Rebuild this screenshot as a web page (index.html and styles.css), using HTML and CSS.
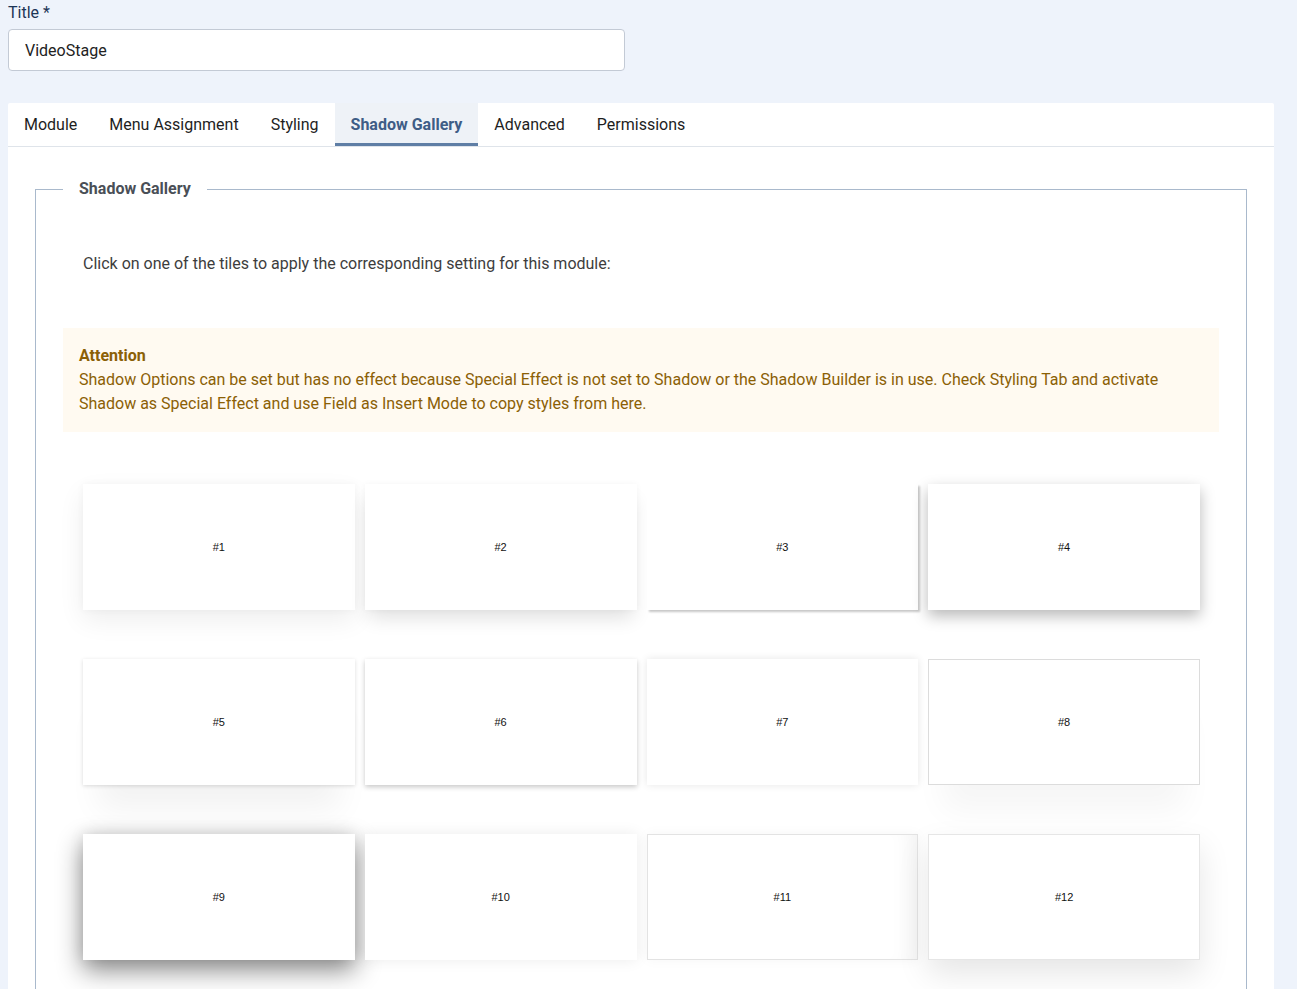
FILE: index.html
```html
<!DOCTYPE html>
<html lang="en">
<head>
<meta charset="utf-8">
<title>VideoStage</title>
<link rel="stylesheet" href="styles.css">
</head>
<body>
<div class="page">
  <label class="title-label" for="title">Title *</label>
  <input class="title-input" id="title" type="text" value="VideoStage">

  <div class="card">
    <div class="tabs">
      <div class="tab">Module</div>
      <div class="tab">Menu Assignment</div>
      <div class="tab">Styling</div>
      <div class="tab active">Shadow Gallery</div>
      <div class="tab">Advanced</div>
      <div class="tab">Permissions</div>
    </div>
    <div class="card-body">
      <fieldset class="gallery">
        <legend>Shadow Gallery</legend>
        <p class="intro">Click on one of the tiles to apply the corresponding setting for this module:</p>
        <div class="alert">
          <strong>Attention</strong><br>
          Shadow Options can be set but has no effect because Special Effect is not set to Shadow or the Shadow Builder is in use. Check Styling Tab and activate Shadow as Special Effect and use Field as Insert Mode to copy styles from here.
        </div>
        <div class="tiles">
          <div class="tile s1">#1</div>
          <div class="tile s2">#2</div>
          <div class="tile s3">#3</div>
          <div class="tile s4">#4</div>
          <div class="tile s5">#5</div>
          <div class="tile s6">#6</div>
          <div class="tile s7">#7</div>
          <div class="tile s8">#8</div>
          <div class="tile s9">#9</div>
          <div class="tile s10">#10</div>
          <div class="tile s11">#11</div>
          <div class="tile s12">#12</div>
        </div>
      </fieldset>
    </div>
  </div>
</div>
</body>
</html>
```
FILE: styles.css
```css
html, body {
  margin: 0;
  padding: 0;
  background: #eef3fb;
  font-family: Roboto, "Liberation Sans", Arial, sans-serif;
  font-size: 16px;
  color: #222;
  overflow: hidden;
}

.page {
  width: 1266px;
  padding: 0 8px;
}

.title-label {
  display: block;
  line-height: 24px;
  color: #1c3556;
  margin-top: 1px;
  margin-bottom: 4px;
}

.title-input {
  display: block;
  box-sizing: border-box;
  width: 617px;
  height: 42px;
  margin: 0;
  padding: 0 16px;
  border: 1px solid #c3cad5;
  border-radius: 4px;
  background: #fff;
  font-family: inherit;
  font-size: 16px;
  color: #222;
}

.card {
  margin-top: 32px;
  background: #fff;
  border-radius: 2px;
  height: 900px;
}

.tabs {
  display: flex;
  border-bottom: 1px solid #dfe4ea;
  height: 43px;
}

.tab {
  padding: 0 16px;
  line-height: 43px;
  color: #1e1e1e;
}

.tab.active {
  background: #eef2f7;
  color: #3e5d86;
  font-weight: 700;
  box-shadow: inset 0 -3px 0 #5f7ea5;
}

.card-body {
  padding: 30px 27px 0;
}

.gallery {
  margin: 0;
  padding: 0 27px 40px;
  border: 1px solid #a9b9cc;
  border-radius: 0;
  min-width: 0;
}

.gallery legend {
  margin-left: 0;
  padding: 0 16px;
  font-weight: 700;
  line-height: 24px;
  color: #4a4f57;
}

.intro {
  margin: 51px 0 52px 20px;
  line-height: 24px;
  color: #3d3d3d;
}

.alert {
  background: #fffaf1;
  color: #8b6005;
  padding: 16px;
  line-height: 24px;
}

.alert strong {
  font-weight: 700;
}

.tiles {
  display: grid;
  grid-template-columns: repeat(4, 1fr);
  column-gap: 10px;
  row-gap: 49px;
  margin: 52px 19px 0 20px;
}

.tile {
  box-sizing: border-box;
  height: 126px;
  background: #fff;
  display: flex;
  align-items: center;
  justify-content: center;
  font-family: "Liberation Sans", Arial, sans-serif;
  font-size: 11px;
  color: #111;
}

.s1 { box-shadow: 0 10px 25px rgba(0,0,0,0.07), 0 0 8px rgba(0,0,0,0.04); }
.s2 { box-shadow: 0 12px 18px -4px rgba(0,0,0,0.12), 0 0 6px rgba(0,0,0,0.04); }
.s3 { box-shadow: 2px 2px 2px rgba(0,0,0,0.22); }
.s4 { box-shadow: 0 6px 14px rgba(0,0,0,0.28); }
.s5 { box-shadow: 0 1px 4px rgba(0,0,0,0.14), 0 40px 30px -15px rgba(0,0,0,0.05); }
.s6 { box-shadow: 0 2px 5px rgba(0,0,0,0.22); }
.s7 { box-shadow: 0 0 8px rgba(0,0,0,0.1); }
.s8 { border: 1px solid #dcdcdc; box-shadow: 0 40px 30px -15px rgba(0,0,0,0.04); }
.s9 { box-shadow: 0 10px 24px rgba(0,0,0,0.48), 0 -2px 14px rgba(0,0,0,0.08); }
.s10 { box-shadow: 0 0 14px rgba(0,0,0,0.08); }
.s11 { border: 1px solid #e3e3e3; box-shadow: inset -25px 0 25px -20px rgba(0,0,0,0.06), 0 0 12px rgba(0,0,0,0.04); }
.s12 { border: 1px solid #e6e6e6; box-shadow: 0 14px 30px rgba(0,0,0,0.1); }
```
